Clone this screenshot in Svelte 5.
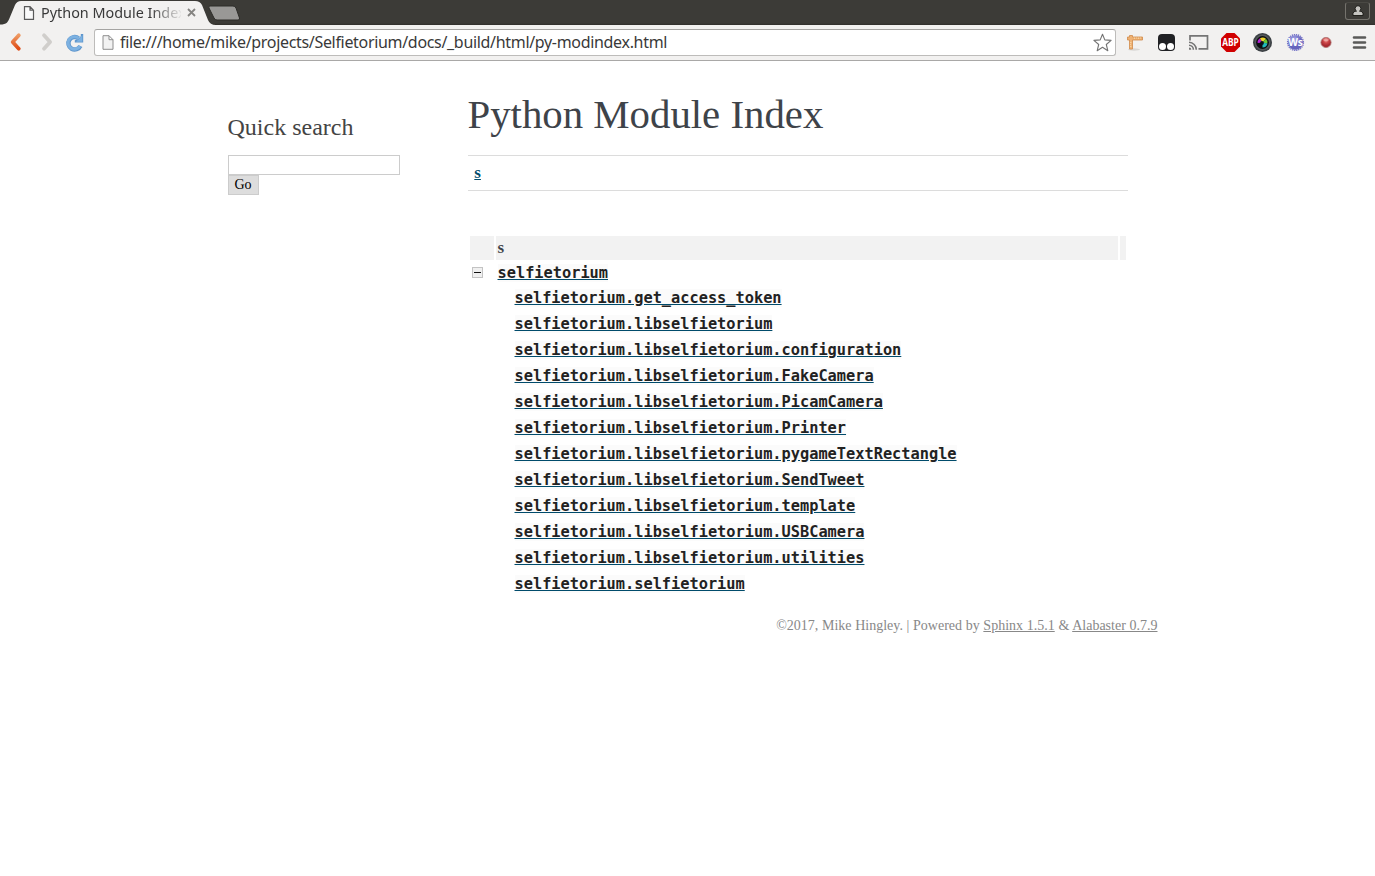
<script lang="ts">
  const url = 'file:///home/mike/projects/Selfietorium/docs/_build/html/py-modindex.html';

  const submodules = [
    'get_access_token',
    'libselfietorium',
    'libselfietorium.configuration',
    'libselfietorium.FakeCamera',
    'libselfietorium.PicamCamera',
    'libselfietorium.Printer',
    'libselfietorium.pygameTextRectangle',
    'libselfietorium.SendTweet',
    'libselfietorium.template',
    'libselfietorium.USBCamera',
    'libselfietorium.utilities',
    'selfietorium'
  ];

  let collapsed = $state(false);
  let query = $state('');
</script>

<div class="tabstrip">
  <svg class="tabs" width="250" height="25" viewBox="0 0 250 25">
    <path d="M0 25V24.5C7 24.5 8 22 10 17L15 5Q17 1 21 1H195Q200 1 202 5L208 20Q210 25 216 25Z" fill="#f2f1f0" />
    <path d="M210 6H233Q235 6 236 8L239.5 18Q240 20 238 20H217Q215 20 214 18L209 8Q208 6 210 6Z" fill="#999896" stroke="#2d2c29" />
  </svg>
  <div class="tab">
    <svg width="12" height="14" viewBox="0 0 12 14">
      <path d="M1.5.7H7L10.5 4.2V13.3H1.5ZM7 .7V4.2H10.5" fill="#fafafa" stroke="#5a5a5a" stroke-width="1.2" />
    </svg>
    <span class="tab-title">Python Module Index</span>
    <svg class="tab-close" width="9" height="9" viewBox="0 0 9 9">
      <path d="M1 1L8 8M8 1L1 8" stroke="#858481" stroke-width="1.8" />
    </svg>
  </div>
  <div class="user">
    <svg width="12" height="12" viewBox="0 0 12 12">
      <path d="M1 10.5V8.2Q1.3 6.5 4.2 6H7.8Q10.7 6.5 11 8.2V10.5Z" fill="#c5c4c0" stroke="#171713" stroke-width=".9" />
      <circle cx="6" cy="3.6" r="2.9" fill="#c5c4c0" stroke="#171713" stroke-width=".9" />
      <path d="M4.8 5H7.2V8H4.8Z" fill="#c5c4c0" />
    </svg>
  </div>
</div>

<div class="toolbar">
  <svg class="nav" width="94" height="35" viewBox="0 25 94 35">
    <defs>
      <linearGradient id="back" x2="0" y2="1">
        <stop stop-color="#ee9962" />
        <stop offset="1" stop-color="#df4c16" />
      </linearGradient>
    </defs>
    <path d="M18.8 35.3L12.7 42L18.8 48.7" fill="none" stroke="url(#back)" stroke-width="3.8" stroke-linecap="round" stroke-linejoin="round" />
    <path d="M44 35.3L50.1 42L44 48.7" fill="none" stroke="#d0cecb" stroke-width="3.8" stroke-linecap="round" stroke-linejoin="round" />
    <path d="M78.5 38.2A6.3 6.3 0 1 0 80.4 46" fill="none" stroke="#5d95cc" stroke-width="4.4" />
    <path d="M83.2 34V42.5H74.8V40.2L77.4 39.4L80.8 36.2V34Z" fill="#5d95cc" />
    <path d="M78.5 38.2A6.3 6.3 0 1 0 79.9 46" fill="none" stroke="#7cb1e1" stroke-width="3" />
    <path d="M82.4 35V41.7H76L78.5 39.6Z" fill="#7cb1e1" />
  </svg>
  <div class="omnibox">
    <svg width="12" height="15" viewBox="0 0 12 15">
      <path d="M1 .7H7L11 4.7V14.3H1ZM7 .7V4.7H11" fill="#f2f2f2" stroke="#8e8e8e" />
    </svg>
    <span class="url">{url}</span>
    <svg class="star" width="20" height="20" viewBox="0 0 20 20">
      <path d="M9.5 1.2L11.8 6.9L18.1 7.4L13.3 11.5L14.8 17.7L9.5 14.3L4.2 17.7L5.7 11.5L.9 7.4L7.2 6.9Z" fill="#fff" stroke="#737373" stroke-width="1.1" stroke-linejoin="round" />
    </svg>
  </div>
  <svg class="extensions" width="259" height="35" viewBox="1116 25 259 35">
    <defs>
      <radialGradient id="gear" cx=".4" cy=".3">
        <stop stop-color="#aaaae8" />
        <stop offset="1" stop-color="#6462bd" />
      </radialGradient>
      <radialGradient id="ball" cx=".5" cy=".3">
        <stop stop-color="#ee9791" />
        <stop offset=".5" stop-color="#cc4648" />
        <stop offset="1" stop-color="#a82b31" />
      </radialGradient>
    </defs>

    <!-- page ruler -->
    <ellipse cx="1134" cy="49.5" rx="6" ry="1.2" fill="#d9d7d5" />
    <path d="M1127.5 37H1129.5V35.5H1132.5V37H1142.5V40H1132.5V49H1129.5V40H1127.5Z" fill="#efb274" stroke="#d08a4a" stroke-width=".8" />
    <path d="M1134.5 37.5V39M1136.5 37.5V38.5M1138.5 37.5V39M1140.5 37.5V38.5M1130 42.5H1131.5M1130 44.5H1131M1130 46.5H1131.5" stroke="#fbdfb4" stroke-width=".7" />

    <!-- tampermonkey -->
    <rect x="1158" y="34" width="17" height="17" rx="4" fill="#202124" />
    <circle cx="1162.5" cy="46.5" r="3.5" fill="#fff" />
    <circle cx="1170.5" cy="46.5" r="3.5" fill="#fff" />

    <!-- cast -->
    <path d="M1190 40.5V35.8H1207.5V48.8H1198.5" fill="none" stroke="#757575" stroke-width="1.7" />
    <path d="M1189 42.3A7.5 7.5 0 0 1 1196.3 49.7M1189 45.2A4.5 4.5 0 0 1 1193.4 49.7" fill="none" stroke="#757575" stroke-width="1.6" />
    <path d="M1189 47.5A2.3 2.3 0 0 1 1191.3 49.8H1189Z" fill="#757575" />

    <!-- adblock -->
    <path d="M1226.5 33H1234.5L1240 38.5V46.5L1234.5 52H1226.5L1221 46.5V38.5Z" fill="#d00000" />
    <text class="abp" x="1222.2" y="46.3" textLength="16.6" lengthAdjust="spacingAndGlyphs">ABP</text>

    <!-- camera lens -->
    <circle cx="1262.5" cy="42.5" r="9.5" fill="#3c4044" />
    <circle cx="1262.5" cy="42.5" r="7.9" fill="#55595c" />
    <circle cx="1262.5" cy="42.5" r="6.4" fill="#0c0e10" />
    <path d="M1262.5 42.5L1257.6 43A5 5 0 0 1 1260 38.2Z" fill="#b523d5" />
    <path d="M1262.5 42.5L1260 38.2A5 5 0 0 1 1265.9 38.8Z" fill="#f0d32c" />
    <path d="M1262.5 42.5L1265.9 38.8A5 5 0 0 1 1267.4 43.4Z" fill="#65c836" />
    <path d="M1262.5 42.5L1267.4 43.4A5 5 0 0 1 1262.5 47.5Z" fill="#20b9be" />
    <circle cx="1262" cy="43" r="1.9" fill="#0b1017" />

    <!-- web services -->
    <circle cx="1295.5" cy="42.5" r="7.8" fill="none" stroke="#7776c7" stroke-width="1.6" stroke-dasharray="1.3 .75" />
    <circle cx="1295.5" cy="42.5" r="7.3" fill="url(#gear)" />
    <text class="ws" x="1295.5" y="46.4">Ws</text>

    <!-- recorder -->
    <circle cx="1326" cy="42.5" r="5.1" fill="url(#ball)" stroke="#ad7775" stroke-width=".8" />
    <ellipse cx="1326" cy="39.8" rx="2.8" ry="1.5" fill="#f5bbb5" opacity=".6" />

    <path d="M1354 37.5H1365M1354 42.5H1365M1354 47.5H1365" stroke="#5a5a58" stroke-width="2.6" stroke-linecap="round" />
  </svg>
</div>

<div class="document">
  <aside class="sidebar">
    <h3>Quick search</h3>
    <form onsubmit={(e) => e.preventDefault()}>
      <input type="text" name="q" bind:value={query} />
      <button type="submit">Go</button>
    </form>
  </aside>

  <main class="body">
    <h1>Python Module Index</h1>
    <div class="jumpbox"><a href="#cap-s">s</a></div>

    <table class="indextable">
      <tbody>
        <tr class="cap" id="cap-s">
          <td class="toggle-cell"></td>
          <td>s</td>
          <td class="last"></td>
        </tr>
        <tr class="package">
          <td>
            <button class="toggler" aria-label="toggle" onclick={() => (collapsed = !collapsed)}>
              <svg width="11" height="11" viewBox="0 0 11 11">
                <rect x=".5" y=".5" width="10" height="10" fill="#f0f0f0" stroke="#c3c3c3" />
                <path d={collapsed ? 'M2 5.5H9M5.5 2V9' : 'M2 5.5H9'} stroke="#111" />
              </svg>
            </button>
          </td>
          <td><a href="#selfietorium"><code>selfietorium</code></a></td>
          <td></td>
        </tr>
        {#if !collapsed}
          {#each submodules as name}
            <tr>
              <td></td>
              <td class="sub"><a href="#{name}"><code>selfietorium.{name}</code></a></td>
              <td></td>
            </tr>
          {/each}
        {/if}
      </tbody>
    </table>
  </main>
</div>

<footer>
  ©2017, Mike Hingley. | Powered by <a href="#sphinx">Sphinx 1.5.1</a> &amp; <a href="#alabaster">Alabaster 0.7.9</a>
</footer>

<style>
  :global(body) {
    background: #fff;
    color: #3e4349;
    font-family: 'Liberation Serif', serif;
    font-size: 17px;
  }

  .tabstrip {
    position: relative;
    display: flex;
    justify-content: space-between;
    box-sizing: border-box;
    height: 25px;
    background: linear-gradient(#3c3b37 23px, #302e2a);
  }

  .tabs {
    position: absolute;
    top: 0;
    left: 0;
  }

  .tab {
    position: relative;
    display: flex;
    align-items: center;
    width: 175px;
    height: 25px;
    padding-left: 23px;
    font-family: 'Noto Sans', sans-serif;
    font-size: 14.4px;
    color: #393939;
  }

  .tab-title {
    width: 140px;
    margin-left: 6px;
    overflow: hidden;
    white-space: nowrap;
    mask-image: linear-gradient(to right, #000 110px, transparent 142px);
  }

  .tab-close {
    margin-left: 6px;
    flex: none;
  }

  .user {
    display: flex;
    justify-content: center;
    align-items: center;
    box-sizing: border-box;
    width: 25px;
    height: 18px;
    margin: 2px 5px 0 0;
    border: 1px solid #75736d;
    border-top-color: #4a4944;
    border-radius: 3px;
  }

  .toolbar {
    display: flex;
    align-items: center;
    box-sizing: border-box;
    height: 36px;
    background: #f2f1f0;
    border-bottom: 1px solid #a9a8a7;
  }

  .nav,
  .extensions {
    flex: none;
  }

  .omnibox {
    display: flex;
    flex: 1;
    align-items: center;
    box-sizing: border-box;
    height: 27px;
    padding: 0 2px 0 7px;
    background: #fff;
    border: 1px solid #bdbcba;
    border-top-color: #a5a4a2;
    border-radius: 3px;
  }

  .url {
    margin: 0 0 1px 6px;
    font-family: 'Noto Sans', sans-serif;
    font-size: 16px;
    letter-spacing: -0.32px;
    line-height: 24px;
    color: #393939;
    white-space: nowrap;
  }

  .star {
    margin-left: auto;
  }

  .abp {
    font: bold 10.5px 'Open Sans', sans-serif;
    fill: #fff;
  }

  .ws {
    font: bold 10px 'Open Sans', sans-serif;
    fill: #fff;
    text-anchor: middle;
  }

  .document {
    display: flex;
    width: 940px;
    margin: 0 auto;
  }

  .sidebar {
    box-sizing: border-box;
    width: 220px;
    padding: 49px 10px 0;
  }

  h3 {
    margin: 0 0 11px;
    font-size: 24px;
    font-weight: normal;
    line-height: 34px;
    color: #444;
  }

  form {
    display: flex;
    flex-direction: column;
    align-items: flex-start;
  }

  input,
  form button {
    box-sizing: border-box;
    height: 20px;
    border: 1px solid #ccc;
    font: 15px 'Liberation Serif', serif;
  }

  input {
    width: 172px;
    outline: none;
  }

  form button {
    width: 31px;
    padding: 0;
    background: #ddd;
    font-size: 14px;
    line-height: 18px;
    color: #000;
  }

  .body {
    width: 660px;
    margin-left: 30px;
  }

  h1 {
    margin: 0 0 16px;
    padding-top: 29px;
    font-size: 40.8px;
    font-weight: normal;
    line-height: 49px;
  }

  .jumpbox {
    box-sizing: border-box;
    height: 36px;
    margin-bottom: 43px;
    padding: 0 6.8px;
    border-top: 1px solid #dcdcdc;
    border-bottom: 1px solid #dcdcdc;
    line-height: 34px;
    font-weight: bold;
  }

  a {
    color: #004b6b;
  }

  .indextable {
    width: 660px;
    border-spacing: 2px;
    table-layout: fixed;
  }

  td {
    height: 24px;
    padding: 0 2px;
    line-height: 24px;
  }

  .cap td {
    background: #f2f2f2;
    font-weight: bold;
  }

  .cap .toggle-cell {
    width: 20px;
  }

  .cap .last {
    width: 2px;
  }

  .package td {
    height: 22px;
    line-height: 22px;
  }

  .sub {
    padding-left: 19px;
  }

  .toggler {
    display: block;
    padding: 0 0 1px;
    border: 0;
    background: none;
    line-height: 0;
  }

  code {
    background: #fbfbfb;
    font: bold 15.3px/20px 'DejaVu Sans Mono', monospace;
    color: #222;
  }

  footer {
    width: 940px;
    margin: 17px auto 0;
    font-size: 14px;
    line-height: 22px;
    word-spacing: 0.17px;
    color: #888;
    text-align: right;
  }

  footer a {
    color: #888;
  }
</style>
